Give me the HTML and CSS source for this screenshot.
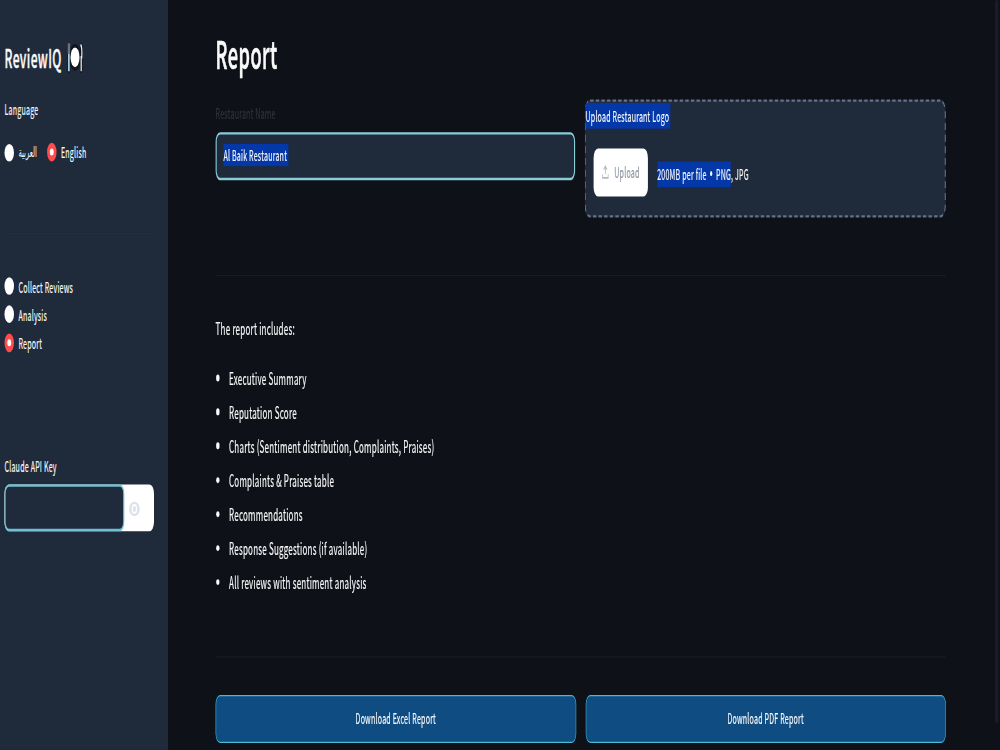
FILE: index.html
```
<!DOCTYPE html>
<html lang="en">
<head>
    <meta charset="UTF-8">
    <meta name="viewport" content="width=device-width, initial-scale=1.0">
    <title>ReviewIQ</title>
    <link rel="stylesheet" href="styles.css">
</head>
<body>
    <div class="app">
        <aside class="sidebar">
            <h2 class="brand">
                <span class="brand-name">ReviewIQ</span>
                <svg class="plate" width="28" height="27" viewBox="0 0 28 27">
                    <g stroke="#10151e" stroke-width="5" stroke-linecap="round" fill="none">
                        <path d="M3 3v21M25 3v21"/>
                        <ellipse cx="14" cy="13" rx="8" ry="9"/>
                    </g>
                    <path d="M3 1v9" stroke="#6d737c" stroke-width="4.5"/>
                    <path d="M3 10v15" stroke="#a9d3ea" stroke-width="3"/>
                    <path d="M24 2q3 3 2 11h-1v12" stroke="#f2f2f2" stroke-width="2.2" fill="none"/>
                    <ellipse cx="14" cy="13" rx="8" ry="8.5" fill="#fff"/>
                </svg>
            </h2>

            <div class="label language-label">Language</div>
            <div class="language-options">
                <label class="option"><span class="radio"></span><span class="arabic" lang="ar">العربية</span></label>
                <label class="option"><span class="radio checked"></span>English</label>
            </div>

            <hr class="side-rule">

            <nav class="menu">
                <label class="option"><span class="radio"></span>Collect Reviews</label>
                <label class="option"><span class="radio"></span>Analysis</label>
                <label class="option"><span class="radio checked"></span>Report</label>
            </nav>

            <hr class="side-rule">

            <div class="label key-label">Claude API Key</div>
            <div class="key-field">
                <div class="key-input"></div>
                <svg class="eye" width="20" height="14" viewBox="0 0 20 14">
                    <ellipse cx="10" cy="7" rx="9.5" ry="6.2" fill="#dce2ea"/>
                    <ellipse cx="10" cy="7" rx="5" ry="4.2" fill="#fff"/>
                    <ellipse cx="10" cy="7" rx="2.6" ry="2.6" fill="#dce2ea"/>
                </svg>
            </div>
        </aside>

        <main class="main">
            <h1 class="title">Report</h1>

            <div class="columns">
                <div class="column">
                    <div class="label name-label">Restaurant Name</div>
                    <div class="text-input"><span class="selected">Al Baik Restaurant</span></div>
                </div>
                <div class="column uploader">
                    <div class="label"><span class="selected tall">Upload Restaurant Logo</span></div>
                    <div class="upload-row">
                        <div class="upload-btn">
                            <svg width="14" height="12" viewBox="0 0 14 12" fill="none" stroke="#b4bac3" stroke-width="1.4">
                                <path d="M7 8V1.2M4 4l3-3 3 3M2 8v3h10V8"/>
                            </svg>
                            <span>Upload</span>
                        </div>
                        <div class="limit"><span class="selected tall">200MB per file <span class="dot">•</span> PNG</span>, JPG</div>
                    </div>
                </div>
            </div>

            <hr class="rule">

            <p class="intro">The report includes:</p>
            <ul class="contents">
                <li>Executive Summary</li>
                <li>Reputation Score</li>
                <li>Charts (Sentiment distribution, Complaints, Praises)</li>
                <li>Complaints &amp; Praises table</li>
                <li>Recommendations</li>
                <li>Response Suggestions (if available)</li>
                <li>All reviews with sentiment analysis</li>
            </ul>

            <hr class="rule">

            <div class="columns">
                <div class="column download">Download Excel Report</div>
                <div class="column download">Download PDF Report</div>
            </div>
        </main>
        <div class="scrollbar"></div>
    </div>
</body>
</html>
```
FILE: styles.css
```
* {
    box-sizing: border-box;
}

html {
    overflow: hidden;
}

body {
    margin: 0;
    width: 1000px;
    height: 750px;
    overflow: hidden;
    background-color: #0e1118;
    font-family: "Noto Sans CJK SC", "Noto Sans", sans-serif;
}

/* wide layout squeezed into the window */
.app {
    display: flex;
    width: 1785px;
    height: 641px;
    transform: scale(0.56, 1.17);
    transform-origin: 0 0;
    color: #fafafa;
    font-size: 14.3px;
    letter-spacing: 0.4px;
    line-height: 24px;
    white-space: nowrap;
    -webkit-text-stroke: 0.15px;
}

.sidebar {
    flex: none;
    width: 300px;
    height: 641px;
    padding: 34px 25px 0 8px;
    background-color: #1f2a3b;
    font-size: 12.6px;
}

.brand {
    display: flex;
    align-items: center;
    gap: 10px;
    height: 30px;
    margin: 0;
    font-size: 21.5px;
    font-weight: 500;
    letter-spacing: 0.7px;
    -webkit-text-stroke: 0.4px;
}

.label {
    height: 20px;
    font-size: 12.6px;
    line-height: 20px;
}

.language-label {
    margin-top: 19px;
}

.language-options {
    display: flex;
    gap: 18px;
    margin-top: 15px;
}

.option {
    display: flex;
    align-items: center;
    gap: 8px;
    height: 24px;
}

.radio {
    width: 17px;
    height: 15px;
    border-radius: 50%;
    background-color: #fff;
}

.radio.checked {
    height: 16px;
    border: 5px solid #ff4b4b;
}

.arabic {
    font-family: "DejaVu Sans", sans-serif;
    font-size: 12px;
    letter-spacing: 0;
    -webkit-text-stroke: 0;
}

.side-rule {
    height: 1px;
    margin: 57px 0 32.5px;
    border: 0;
    background-color: #232d3d;
}

.menu + .side-rule {
    margin: 46px 0 36.5px;
}

.key-field {
    display: flex;
    align-items: center;
    gap: 8px;
    height: 40px;
    margin-top: 6px;
    border-radius: 8px;
    background-color: #fff;
}

.key-field .eye {
    margin-top: 2px;
}

.key-input {
    width: 214px;
    height: 40px;
    border: 2px solid #6fc0d0;
    border-radius: 8px;
    background-color: #1f2a3b;
}

.main {
    flex: none;
    width: 1389px;
    padding: 21px 0 0 85px;
}

.title {
    height: 48px;
    margin: 0 0 15.5px;
    font-size: 32.5px;
    font-weight: 500;
    letter-spacing: 0.8px;
    line-height: 48px;
    -webkit-text-stroke: 0.6px;
}

.columns {
    display: flex;
    gap: 17px;
}

.column {
    flex: 1;
}

.name-label {
    margin: 2px 0 6px;
    color: #30343c;
}

.text-input {
    display: flex;
    align-items: center;
    height: 41px;
    padding: 0 12px;
    border: 2px solid #88ccd6;
    border-radius: 8px;
    background-color: #1f2a3b;
    font-size: 12.6px;
}

.selected {
    display: inline-block;
    background-color: #0437a8;
    line-height: 19px;
    padding-right: 2px;
}

.text-input .selected {
    margin-top: -1px;
}

.selected.tall {
    line-height: 22px;
}

.limit .selected {
    padding-right: 0;
}

.dot {
    margin: 0 1px;
    font-family: "DejaVu Sans", sans-serif;
    font-size: 13px;
    line-height: 1;
}

.uploader {
    height: 101px;
    padding-top: 1px;
    border: 2px dashed #64718a;
    border-radius: 10px;
    background-color: #1f2a3b;
}

.upload-row {
    display: flex;
    align-items: center;
    gap: 17px;
    margin: 19px 14px 0;
    font-size: 12.6px;
}

.limit {
    padding-top: 3px;
}

.upload-btn {
    display: flex;
    align-items: center;
    justify-content: center;
    gap: 9px;
    width: 97px;
    height: 41px;
    border-radius: 8px;
    background-color: #fff;
    color: #8b929e;
}

.rule {
    height: 1px;
    margin: 49px 0 32.5px;
    border: 0;
    background-color: #191c24;
}

.intro {
    margin: 0 0 18px;
}

.contents {
    margin: 0;
    padding: 0;
    list-style: none;
}

.contents li {
    display: flex;
    align-items: center;
    gap: 17px;
    height: 29.1px;
    padding-bottom: 4px;
}

.contents li::before {
    content: "";
    width: 6px;
    height: 5.5px;
    margin: 1px 0 0 1px;
    border-radius: 50%;
    background-color: #fafafa;
}

.contents + .rule {
    margin: 47px 0 32px;
}

.download {
    height: 41px;
    border: 1px solid #48b9d0;
    border-radius: 8px;
    background-color: #0f4c81;
    font-size: 12.6px;
    line-height: 38px;
    text-align: center;
}

.scrollbar {
    flex: none;
    width: 6px;
    height: 618px;
    margin-left: 88px;
    border-radius: 3px;
    background-color: #1a1d26;
}
```
